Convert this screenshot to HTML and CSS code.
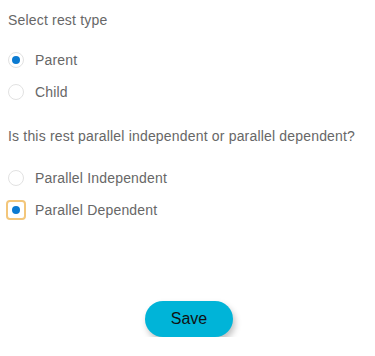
FILE: index.html
```html
<!DOCTYPE html>
<html lang="en">
<head>
    <meta charset="UTF-8">
    <title>Rest type</title>
    <link rel="stylesheet" href="styles.css">
</head>
<body>
    <div class="form">
        <div class="question first">Select rest type</div>
        <div class="radio-group">
            <label class="radio-row">
                <input type="radio" name="rest-type" checked>
                <span class="dot"></span>
                <span class="text">Parent</span>
            </label>
            <label class="radio-row">
                <input type="radio" name="rest-type">
                <span class="dot"></span>
                <span class="text">Child</span>
            </label>
        </div>

        <div class="question second">Is this rest parallel independent or parallel dependent?</div>
        <div class="radio-group parallel">
            <label class="radio-row">
                <input type="radio" name="parallel">
                <span class="dot"></span>
                <span class="text">Parallel Independent</span>
            </label>
            <label class="radio-row focused">
                <input type="radio" name="parallel" checked>
                <span class="dot"></span>
                <span class="text">Parallel Dependent</span>
            </label>
        </div>

        <div class="actions">
            <button class="save-btn">Save</button>
        </div>
    </div>
</body>
</html>
```

FILE: styles.css
```css
body {
    margin: 0;
    font-family: 'Liberation Sans', Arial, sans-serif;
    font-size: 14px;
    letter-spacing: 0.18px;
    color: #676767;
    background-color: #ffffff;
}
.form {
    padding: 12px 8px 0 8px;
}
.question {
    line-height: 16px;
}
.question.second {
    margin-top: 20px;
}
.radio-group {
    margin-top: 16px;
}
.radio-group.parallel {
    margin-top: 18px;
}
.radio-row {
    display: flex;
    align-items: center;
    height: 32px;
    cursor: pointer;
}
.radio-row input {
    display: none;
}
.dot {
    position: relative;
    width: 16px;
    height: 16px;
    box-sizing: border-box;
    border: 1px solid #e2e2e2;
    border-radius: 50%;
    background-color: #ffffff;
    margin-right: 11px;
    flex-shrink: 0;
}
.radio-row input:checked + .dot::after {
    content: '';
    position: absolute;
    left: 3px;
    top: 3px;
    width: 8px;
    height: 8px;
    border-radius: 50%;
    background-color: #0b7ad1;
}
.radio-row.focused .dot {
    outline: 2px solid #f3c67a;
    outline-offset: 0;
    border-radius: 2px;
    border-color: #ffffff;
}
.text {
    line-height: 16px;
}
.actions {
    display: flex;
    justify-content: center;
    margin-top: 75px;
    padding-left: 3px;
}
.save-btn {
    width: 88px;
    height: 36px;
    border: none;
    border-radius: 18px;
    background-color: #00b4d8;
    color: #111111;
    font-family: 'Liberation Sans', Arial, sans-serif;
    font-size: 16px;
    letter-spacing: 0;
    cursor: pointer;
    box-shadow: 2px 4px 6px rgba(0, 0, 0, 0.25);
}
```
